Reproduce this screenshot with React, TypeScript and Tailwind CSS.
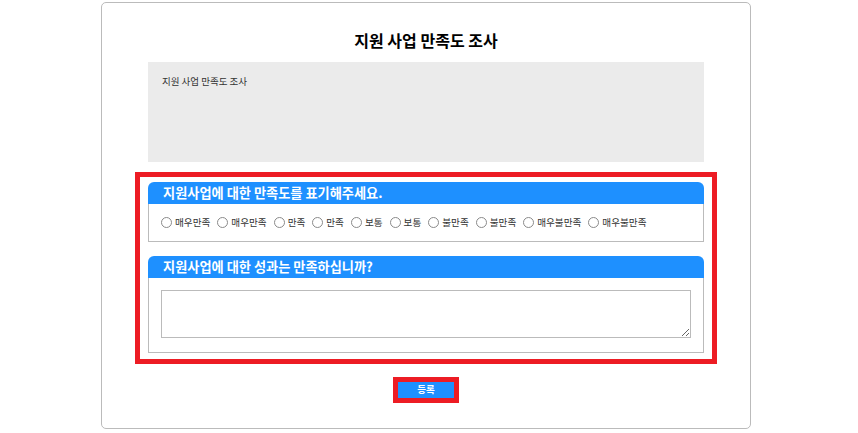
import React from "react";

const labels = [
  "매우만족",
  "매우만족",
  "만족",
  "만족",
  "보통",
  "보통",
  "불만족",
  "불만족",
  "매우불만족",
  "매우불만족",
];

function Header({ children }: { children: React.ReactNode }) {
  return (
    <div className="h-[22px] bg-[#1e90ff] rounded-t-[6px] pl-[15px] flex items-center text-white font-bold text-[13.2px] leading-none">
      {children}
    </div>
  );
}

export default function App() {
  return (
    <div
      className="w-[858px] h-[433px] bg-white overflow-hidden pt-[2px]"
      style={{ fontFamily: '"Noto Sans CJK KR", "Noto Sans", sans-serif' }}
    >
      <div className="ml-[101px] w-[650px] h-[427px] border border-[#bbb] rounded-[5px] flex flex-col items-center">
        <div className="mt-[25px] h-[24px] leading-[24px] text-[16px] font-bold text-black">
          지원 사업 만족도 조사
        </div>
        <div className="mt-[10px] w-[556px] h-[100px] bg-[#ebebeb] pl-[14px] pt-[13px] text-[9.5px] leading-[13px] text-[#333]">
          지원 사업 만족도 조사
        </div>
        <div className="mt-[10px] w-[582px] border-[5px] border-[#ed1c24] px-[8px] pt-[5px] pb-[6px]">
          <Header>지원사업에 대한 만족도를 표기해주세요.</Header>
          <div className="h-[38px] border-x border-b border-[#bbb] pl-[12px] flex items-center">
            {labels.map((l, i) => (
              <label key={i} className="flex items-center mr-[7px]">
                <span className="w-[11px] h-[11px] rounded-full border border-[#8a8a8a] bg-white" />
                <span className="ml-[3px] text-[9.6px] leading-none text-[#333]">{l}</span>
              </label>
            ))}
          </div>
          <div className="mt-[14px]">
            <Header>지원사업에 대한 성과는 만족하십니까?</Header>
            <div className="border-x border-b border-[#bbb] px-[12px] pt-[12px] pb-[14px]">
              <textarea className="block w-full h-[48px] border border-[#bbb] bg-white outline-none" />
            </div>
          </div>
        </div>
        <button className="mt-[13px] w-[66px] h-[26px] border-[5px] border-[#ed1c24] bg-[#1e90ff] text-white font-bold text-[9.5px] leading-none flex items-center justify-center">
          등록
        </button>
      </div>
    </div>
  );
}
